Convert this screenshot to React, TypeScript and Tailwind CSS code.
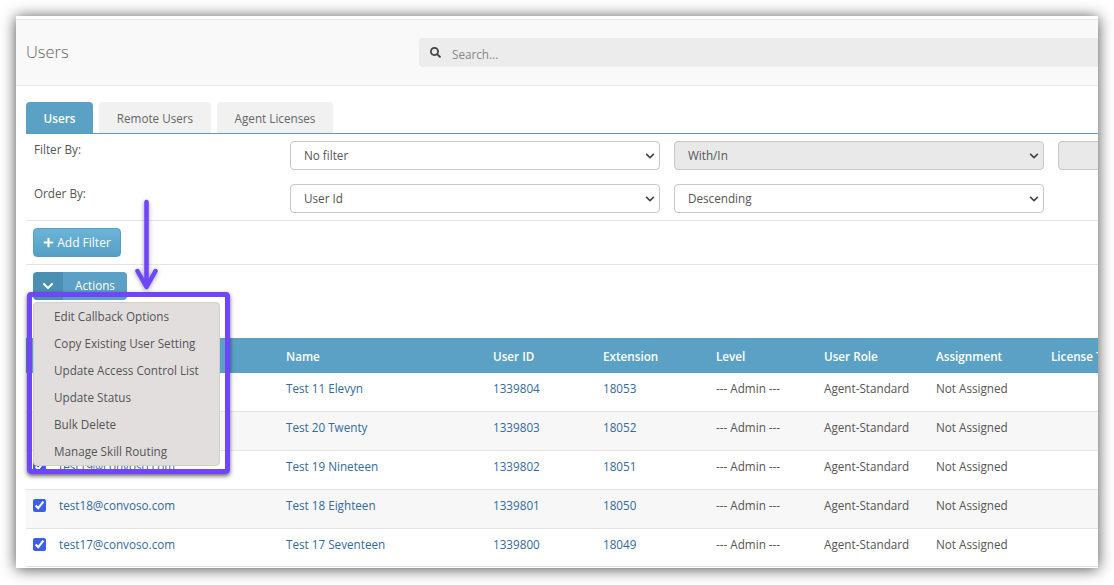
import { FaChevronDown, FaPlus, FaSearch } from 'react-icons/fa';

const rows = [
  { email: 'test11@convoso.com', name: 'Test 11 Elevyn', id: '1339804', ext: '18053' },
  { email: 'test20@convoso.com', name: 'Test 20 Twenty', id: '1339803', ext: '18052' },
  { email: 'test19@convoso.com', name: 'Test 19 Nineteen', id: '1339802', ext: '18051' },
  { email: 'test18@convoso.com', name: 'Test 18 Eighteen', id: '1339801', ext: '18050' },
  { email: 'test17@convoso.com', name: 'Test 17 Seventeen', id: '1339800', ext: '18049' },
];

const menuItems = [
  'Edit Callback Options',
  'Copy Existing User Setting',
  'Update Access Control List',
  'Update Status',
  'Bulk Delete',
  'Manage Skill Routing',
];

function Select({ value, disabled }: { value: string; disabled?: boolean }) {
  return (
    <div
      className={`relative flex h-[29px] w-[370px] shrink-0 items-center rounded border border-[#c8c8c8] pl-[13px] text-[#555] ${
        disabled ? 'bg-[#e9e9e9]' : 'bg-white'
      }`}
    >
      <span className="pt-px">{value}</span>
      <FaChevronDown className="absolute right-[4px] top-[9px] text-[10px] text-[#444]" />
    </div>
  );
}

function Tab({ label, active, width }: { label: string; active?: boolean; width: string }) {
  return (
    <div
      className={`flex h-[31px] items-center justify-center rounded-t-sm pt-[3px] ${width} ${
        active ? 'bg-[#5ba1c5] font-semibold text-white' : 'bg-[#f1f1f1] text-[#666]'
      }`}
    >
      {label}
    </div>
  );
}

export default function App() {
  return (
    <div className="h-[585px] w-[1114px] overflow-hidden bg-white pb-[17px] pl-4 pr-4 pt-4 font-['Open_Sans',sans-serif] text-[11.7px] text-[#555]">
      <div className="relative flex h-[552px] w-[1082px] flex-col overflow-hidden bg-white shadow-[0_1px_14px_rgba(0,0,0,0.7)]">
        <header className="mt-[3px] flex h-[67px] shrink-0 items-center border-b border-t border-[#e9e9e9] bg-[#f9f9f9] pl-[10px]">
          <h1 className="text-[16.5px] font-light text-[#666]">Users</h1>
          <div className="ml-auto flex h-[29px] w-[679px] items-center gap-[11px] rounded-l bg-[#ececec] pl-[11px] text-[#888]">
            <FaSearch className="text-[11px] text-[#444]" />
            <span className="pt-[4px]">Search...</span>
          </div>
        </header>

        <div className="ml-[10px] mt-4 flex shrink-0 gap-[6px] border-b border-[#5b9dbd]">
          <Tab label="Users" active width="w-[67px]" />
          <Tab label="Remote Users" width="w-[112px]" />
          <Tab label="Agent Licenses" width="w-[116px]" />
        </div>

        <div className="ml-[10px] flex shrink-0 flex-col gap-[14px] border-b border-[#e4e4e4] py-[7px]">
          <div className="flex gap-[14px]">
            <div className="w-[250px] shrink-0 pl-2 leading-[16px] text-[#555]">Filter By:</div>
            <Select value="No filter" />
            <Select value="With/In" disabled />
            <div className="h-[29px] w-[60px] shrink-0 rounded border border-[#c8c8c8] bg-[#e9e9e9]" />
          </div>
          <div className="flex gap-[14px]">
            <div className="w-[250px] shrink-0 pl-2 pt-px leading-[16px] text-[#555]">Order By:</div>
            <Select value="User Id" />
            <Select value="Descending" />
          </div>
        </div>

        <div className="ml-[10px] shrink-0 border-b border-[#e4e4e4] px-[7px] py-[7px]">
          <button className="flex h-[29px] w-[88px] items-center justify-center gap-[3px] rounded-sm border border-[#52a0c8] bg-gradient-to-b from-[#6cb4d8] to-[#559fc6] text-xs font-medium text-white">
            <FaPlus className="text-[11px]" />
            Add Filter
          </button>
        </div>

        <div className="ml-[17px] mt-[7px] flex h-[28px] w-[94px] shrink-0 overflow-hidden rounded-sm text-white">
          <span className="flex w-[30px] items-center justify-center bg-[#4b8fb2]">
            <FaChevronDown className="text-[12px]" />
          </span>
          <span className="flex flex-1 items-center justify-center bg-[#5ba1c5]">Actions</span>
        </div>

        <table className="ml-[10px] mt-[38px] w-[1122px] shrink-0 table-fixed border-collapse">
          <colgroup>
            <col className="w-[260px]" />
            <col className="w-[207px]" />
            <col className="w-[110px]" />
            <col className="w-[113px]" />
            <col className="w-[108px]" />
            <col className="w-[112px]" />
            <col className="w-[115px]" />
            <col className="w-[97px]" />
          </colgroup>
          <thead>
            <tr className="h-[35px] bg-[#5ba1c5] text-left font-semibold text-white">
              <th className="pt-[3px] font-semibold" />
              <th className="pt-[3px] font-semibold">Name</th>
              <th className="pt-[3px] font-semibold">User ID</th>
              <th className="pt-[3px] font-semibold">Extension</th>
              <th className="pt-[3px] font-semibold">Level</th>
              <th className="pt-[3px] font-semibold">User Role</th>
              <th className="pt-[3px] font-semibold">Assignment</th>
              <th className="whitespace-nowrap pt-[3px] font-semibold">License Type</th>
            </tr>
          </thead>
          <tbody>
            {rows.map((r) => (
              <tr
                key={r.id}
                className="h-[39px] border-b border-[#e4e4e4] first:h-[38px] last:h-[38px] even:bg-[#f7f7f7] [&>td]:pb-[5px]"
              >
                <td>
                  <div className="flex items-center gap-[13px] pl-[7px]">
                    <input type="checkbox" checked readOnly className="m-0 size-[13px] accent-[#3b5fe8]" />
                    <a className="text-[#336a9b]">{r.email}</a>
                  </div>
                </td>
                <td className="text-[#336a9b]">{r.name}</td>
                <td className="text-[#336a9b]">{r.id}</td>
                <td className="text-[#336a9b]">{r.ext}</td>
                <td>--- Admin ---</td>
                <td>Agent-Standard</td>
                <td>Not Assigned</td>
                <td />
              </tr>
            ))}
          </tbody>
        </table>

        {/* dropdown menu over the table */}
        <div className="absolute left-[17px] top-[286px] flex h-[164px] w-[187px] flex-col rounded border border-[#d2cdcd] bg-[#e2dede] text-[#555]">
          {menuItems.map((item) => (
            <div key={item} className="flex h-[27px] shrink-0 items-center pl-5">
              {item}
            </div>
          ))}
        </div>

        {/* annotation: purple frame and arrow */}
        <div className="absolute left-[11px] top-[276px] h-[182px] w-[203px] rounded border-[5px] border-[#6f46fb] shadow-[0_2px_4px_rgba(0,0,0,0.6)]" />
        <svg
          className="absolute left-[115px] top-[180px] drop-shadow-[0_1px_2px_rgba(0,0,0,0.4)]"
          width="30"
          height="96"
          viewBox="0 0 30 96"
          fill="none"
        >
          <path
            d="M15.5 6V90M6.5 75L15.5 91L24.5 75"
            stroke="#6f46fb"
            strokeWidth="4.5"
            strokeLinecap="round"
            strokeLinejoin="round"
          />
        </svg>
      </div>
    </div>
  );
}
